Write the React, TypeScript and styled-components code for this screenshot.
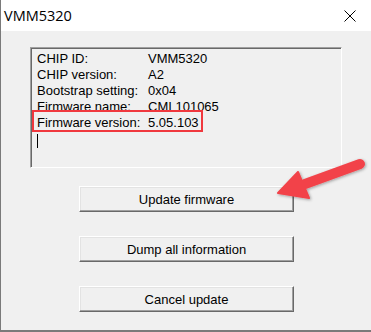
import { Fragment } from "react";
import styled, { createGlobalStyle } from "styled-components";

const GlobalStyle = createGlobalStyle`
  html, body {
    margin: 0;
    padding: 0;
    background: #ffffff;
  }
`;

const Window = styled.div`
  position: relative;
  width: 371px;
  height: 332px;
  box-sizing: border-box;
  border-left: 1px solid #7a7a7a;
  border-bottom: 2px solid #7a7a7a;
  display: flex;
  flex-direction: column;
  overflow: hidden;
  font-family: "Liberation Sans", Arial, sans-serif;
`;

const TitleBar = styled.div`
  height: 31px;
  flex-shrink: 0;
  background: #ffffff;
  display: flex;
  align-items: center;
  justify-content: space-between;
  padding: 0 0 0 3px;
  font-family: "Open Sans", "Liberation Sans", sans-serif;
  font-size: 14.5px;
  color: #000;
`;

const CloseIcon = styled.svg`
  width: 12px;
  height: 12px;
  margin-right: 15px;
`;

const Body = styled.div`
  flex: 1;
  background: #f0f0f0;
  display: flex;
  flex-direction: column;
  align-items: flex-start;
  padding: 16px 0 0 29px;
`;

const InfoBox = styled.div`
  position: relative;
  width: 312px;
  height: 121px;
  box-sizing: border-box;
  border-top: 1px solid #a0a0a0;
  border-left: 1px solid #a0a0a0;
  border-right: 1px solid #ffffff;
  border-bottom: 1px solid #ffffff;
  box-shadow: inset 1px 1px 0 #696969;
  padding: 3px 6px;
  font-size: 13px;
  line-height: 16px;
  color: #000;
  white-space: nowrap;
`;

const InfoGrid = styled.div`
  display: grid;
  grid-template-columns: 111px auto;
`;

const Caret = styled.div`
  width: 1px;
  height: 14px;
  background: #000;
  margin-top: 3px;
`;

const Highlight = styled.div`
  position: absolute;
  left: 1px;
  top: 62px;
  width: 167px;
  height: 18px;
  border: 2px solid #f0383e;
`;

const Buttons = styled.div`
  display: flex;
  flex-direction: column;
  gap: 24px;
  margin: 18px 0 0 49px;
`;

const Button = styled.button`
  width: 215px;
  height: 26px;
  box-sizing: border-box;
  background: #f0f0f0;
  border: none;
  border-top: 1px solid #ffffff;
  border-left: 1px solid #ffffff;
  border-right: 1px solid #696969;
  border-bottom: 1px solid #696969;
  box-shadow: inset -1px -1px 0 #a0a0a0, inset 1px 1px 0 #e3e3e3;
  font-family: "Liberation Sans", Arial, sans-serif;
  font-size: 13px;
  color: #000;
  padding: 0;
`;

const Arrow = styled.svg`
  position: absolute;
  left: 260px;
  top: 150px;
  width: 111px;
  height: 70px;
  overflow: visible;
`;

const rows: [string, string][] = [
  ["CHIP ID:", "VMM5320"],
  ["CHIP version:", "A2"],
  ["Bootstrap setting:", "0x04"],
  ["Firmware name:", "CMI 101065"],
  ["Firmware version:", "5.05.103"],
];

export default function App() {
  return (
    <>
      <GlobalStyle />
      <Window>
        <TitleBar>
          <span>VMM5320</span>
          <CloseIcon viewBox="0 0 12 12">
            <path d="M0.5 0.5 L11.5 11.5 M11.5 0.5 L0.5 11.5" stroke="#000" strokeWidth="1" />
          </CloseIcon>
        </TitleBar>
        <Body>
          <InfoBox>
            <InfoGrid>
              {rows.map(([k, v]) => (
                <Fragment key={k}>
                  <span>{k}</span>
                  <span>{v}</span>
                </Fragment>
              ))}
            </InfoGrid>
            <Caret />
            <Highlight />
          </InfoBox>
          <Buttons>
            <Button>Update firmware</Button>
            <Button>Dump all information</Button>
            <Button>Cancel update</Button>
          </Buttons>
        </Body>
        <Arrow viewBox="0 0 111 70">
          <defs>
            <filter id="sh" x="-20%" y="-20%" width="140%" height="140%">
              <feDropShadow dx="1" dy="1" stdDeviation="1.5" floodColor="#000" floodOpacity="0.35" />
            </filter>
          </defs>
          <g filter="url(#sh)" fill="#f2434a">
            <path d="M99 14 L44 34" stroke="#f2434a" strokeWidth="10" strokeLinecap="round" />
            <path d="M37 22 L17 43 L48 48 Z" strokeLinejoin="round" stroke="#f2434a" strokeWidth="2" />
          </g>
        </Arrow>
      </Window>
    </>
  );
}
